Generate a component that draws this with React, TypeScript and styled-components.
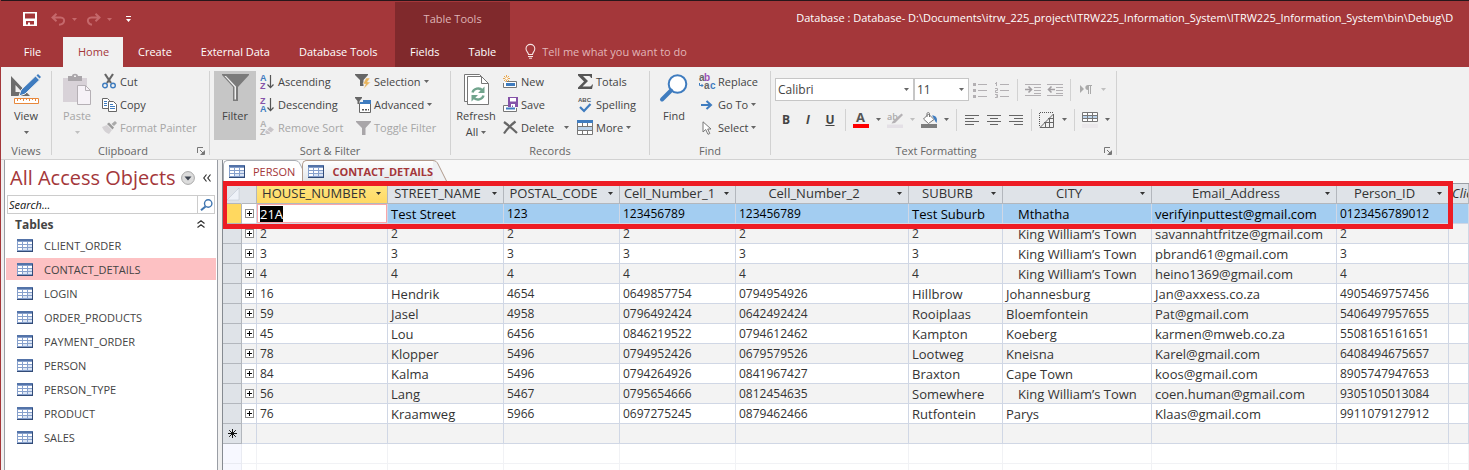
import React from "react";
import styled, { createGlobalStyle, css } from "styled-components";

const GlobalStyle = createGlobalStyle`
  * { box-sizing: border-box; }
  body {
    margin: 0;
    overflow: hidden;
    background: #f0f0f0;
    font-family: "Open Sans", "Noto Sans", sans-serif;
    font-size: 11px;
    color: #444;
  }
  button, input, select { font: inherit; color: inherit; }
  button { background: none; border: 0; padding: 0; margin: 0; cursor: pointer; }
  svg { display: block; flex: none; overflow: visible; }
`;

const colors = {
  brand: "#a4373a",
  brandDark: "#80292c",
  ribbon: "#f1f1f1",
  line: "#d2d2d2",
  gridLine: "#d0d7e5",
  marker: "#ed1c24",
};

/* ---------- Icons ---------- */

const Svg = ({ w, h, children }: { w: number; h: number; children: React.ReactNode }) => (
  <svg width={w} height={h} viewBox={`0 0 ${w} ${h}`} fill="none" aria-hidden="true">
    {children}
  </svg>
);

const Caret = ({ color = "#666" }: { color?: string }) => (
  <Svg w={5} h={3}><path d="M0 0H5L2.5 3Z" fill={color} /></Svg>
);

const SaveDiskIcon = () => (
  <Svg w={14} h={14}>
    <path d="M0 0H14V14H0Z M2 1.5V6.5H12V1.5Z M3 9V12.5H5V10.5H7V12.5H11V9Z" fill="#fff" fillRule="evenodd" />
  </Svg>
);
const UndoIcon = () => (
  <Svg w={15} h={13}>
    <path d="M5.5 .8 1.5 4.5 5.5 8.2M2 4.5H9.5C12.5 4.5 13.5 6.5 13 8.5 12.5 10.6 10.5 11.5 8 11.8" stroke="#c5686b" strokeWidth="2" />
  </Svg>
);
const RedoIcon = () => (
  <Svg w={15} h={13}>
    <path d="M9.5 .8 13.5 4.5 9.5 8.2M13 4.5H5.5C2.5 4.5 1.5 6.5 2 8.5 2.5 10.6 4 11.5 6 11.8" stroke="#c5686b" strokeWidth="2" />
  </Svg>
);
const CustomizeIcon = () => (
  <Svg w={5} h={6}><path d="M0 0H5V1H0ZM0 3H5L2.5 6Z" fill="#fff" /></Svg>
);
const BulbIcon = () => (
  <Svg w={11} h={15}>
    <path d="M3.5 10.5C3.5 8.5 1 7.5 1 4.8A4.4 4.4 0 0 1 9.8 4.8C9.8 7.5 7.5 8.5 7.5 10.5Z" stroke="#f6e3e3" strokeWidth="1.1" />
    <path d="M3 12.5H8M4 14.2H7" stroke="#f6e3e3" />
  </Svg>
);
const ViewIcon = () => (
  <Svg w={30} h={30}>
    <path d="M0 2 19 22H0ZM4.500 11V18H11Z" fill="#6d6d6d" fillRule="evenodd" />
    <path d="M8 22 10 16 24.500 2 28.500 6 14 20Z" fill="#3f7cbf" stroke="#f1f1f1" strokeWidth="1" />
    <path d="M25.500 1.500 27 0 30 3 28.500 4.500Z" fill="#3f7cbf" />
    <path d="M3.500 24.500H27.500V29.500H3.500Z" fill="#fff" stroke="#e8883c" />
    <path d="M6.500 24V27M9.500 24V26M12.500 24V27M15.500 24V26M18.500 24V27M21.500 24V26M24.500 24V27" stroke="#e8883c" />
  </Svg>
);
const PasteIcon = () => (
  <Svg w={28} h={31}>
    <path d="M0 4H24V28H0Z" fill="#d8d2d8" />
    <path d="M5 2H9C9 -1 15 -1 15 2H19V7H5Z" fill="#aaa6aa" />
    <path d="M11 1.500H13V3H11Z" fill="#f1f1f1" />
    <path d="M14.500 11.500H22.500L27.500 16.500V30.500H14.500Z" fill="#f6f2f7" stroke="#b5b0b5" />
    <path d="M22.500 11.500V16.500H27.500" stroke="#b5b0b5" />
  </Svg>
);
const CutIcon = () => (
  <Svg w={14} h={15}>
    <path d="M3 0 9 9M11 0 5 9" stroke="#666" strokeWidth="2.200" />
    <circle cx="3" cy="11.500" r="2.300" stroke="#3f7cbf" strokeWidth="1.400" />
    <circle cx="11" cy="11.500" r="2.300" stroke="#3f7cbf" strokeWidth="1.400" />
  </Svg>
);
const CopyIcon = () => (
  <Svg w={15} h={14}>
    <path d="M.5.500H5.500L7.500 2.500V10.500H.5Z" fill="#fff" stroke="#666" />
    <path d="M2 3.500H5M2 5.500H5M2 7.500H5" stroke="#3f7cbf" />
    <path d="M6.500 3.500H11.500L14.500 6.500V13.500H6.500Z" fill="#fff" stroke="#666" />
    <path d="M8 6.500H11M8 8.500H13M8 10.500H13" stroke="#3f7cbf" />
  </Svg>
);
const PainterIcon = () => (
  <Svg w={15} h={13}>
    <path d="M0 6 5 4 10 9 7 13C4 12 2 10 0 6Z" fill="#d5d2d5" />
    <path d="M5 3 7 1.500 12 6.500 10.500 8.500Z" fill="#9b9b9b" />
    <path d="M9.500 3 13 0 15 2 12 5Z" fill="#aaa" />
  </Svg>
);
const FilterIcon = () => (
  <Svg w={27} h={27}>
    <path d="M0 0H27V1L16 13V27H11V13L0 1Z" fill="#7b7b7b" />
    <path d="M2.500 2 12.500 13V25.500H14V12.500L4 2Z" fill="#f0f0f0" />
  </Svg>
);
const Letter = ({ x, y, fill, size = 8, children }: { x: number; y: number; fill: string; size?: number; children: string }) => (
  <text x={x} y={y} fill={fill} fontSize={size} fontWeight="700" fontFamily="Liberation Sans, sans-serif">{children}</text>
);
const SortIcon = ({ top, bottom, topColor, bottomColor }: { top: string; bottom: string; topColor: string; bottomColor: string }) => (
  <Svg w={14} h={16}>
    <Letter x={0} y={7} fill={topColor} size={9}>{top}</Letter>
    <Letter x={0} y={15} fill={bottomColor} size={9}>{bottom}</Letter>
    <path d="M10.500 1V13.500M7.500 10.500 10.500 13.700 13.500 10.500" stroke="#555" strokeWidth="1.200" />
  </Svg>
);
const RemoveSortIcon = () => (
  <Svg w={14} h={16}>
    <Letter x={0} y={7} fill="#b0b0b0" size={9}>A</Letter>
    <Letter x={0} y={15} fill="#b0b0b0" size={9}>Z</Letter>
    <path d="M5 12 10 6.500 14 9.500 9.500 14H6.500Z" fill="#c9c5c9" />
    <path d="M7 10 11 13" stroke="#f1f1f1" />
  </Svg>
);
const SelectionIcon = () => (
  <Svg w={16} h={15}>
    <path d="M0 0H13V1L8.500 6V12H5V6L0 1Z" fill="#666" />
    <path d="M11 4H15L12.500 8H15.500L8.500 15 10.500 10H8Z" fill="#e9b45c" stroke="#f1f1f1" strokeWidth=".5" />
  </Svg>
);
const AdvancedIcon = () => (
  <Svg w={16} h={16}>
    <path d="M0 0H7V1L4.500 4V7H2.500V4L0 1Z" fill="#666" />
    <path d="M4.500 6.500H15.500V15.500H4.500Z" fill="#fff" stroke="#666" />
    <path d="M8 3H16V7H5V5H8Z" fill="#3f7cbf" />
    <path d="M7 12H9V13.500H7ZM10 12H12V13.500H10ZM13 12H14V13.500H13Z" fill="#555" />
  </Svg>
);
const ToggleFilterIcon = () => (
  <Svg w={15} h={14}><path d="M0 0H15V1L9.500 7V14H6V7L0 1Z" fill="#a9a6a9" /></Svg>
);
const RefreshIcon = () => (
  <Svg w={25} h={31}>
    <path d="M3.500 27.500H.5V.5H15.500L17.500 2.500" fill="#fff" stroke="#777" />
    <path d="M3.500 2.500H17.500L24.500 9.500V30.500H3.500Z" fill="#fff" stroke="#777" />
    <path d="M17.500 2.500V9.500H24.500" stroke="#777" />
    <path d="M8.500 18.500C9.500 14.500 15.500 13 18.500 16.500M19.500 21.500C18.500 25.500 12.500 27 9.500 23.500" stroke="#71a48d" strokeWidth="2.400" />
    <path d="M20.500 12.500V19H14ZM7.500 27.500V21H14Z" fill="#71a48d" />
  </Svg>
);
const NewIcon = () => (
  <Svg w={14} h={14}>
    <path d="M2.500 6.500H13.500V12.500H.5V8" fill="#fff" stroke="#777" />
    <path d="M3 8H12V11H3Z" fill="#3f7cbf" />
    <path d="M3.500 0V7M0 3.500H7M1 1 6 6M6 1 1 6" stroke="#e9a94f" />
    <circle cx="3.500" cy="3.500" r="1.300" fill="#fff" />
  </Svg>
);
const SaveIcon = () => (
  <Svg w={15} h={15}>
    <path d="M5 8.500H.5V14.500H13.500V11" fill="#fff" stroke="#777" />
    <path d="M3 10.500H12V12.500H3Z" fill="#3f7cbf" />
    <path d="M5 0H15V10H5Z" fill="#8552a8" />
    <path d="M7 1H13V4.500H7ZM8 7H12V10H10V8.500H9V10H8Z" fill="#fff" />
  </Svg>
);
const DeleteIcon = () => (
  <Svg w={14} h={13}><path d="M1 1C5 4 10 8 14 12M12.500 .5C7 4.500 4 8 1 12.500" stroke="#666" strokeWidth="2.200" /></Svg>
);
const TotalsIcon = () => (
  <Svg w={15} h={15}><path d="M0 0H14V4H13C12.500 2.500 12 2 10 2H5L10 7 4.500 12.500H11C13 12.500 13.500 12 14 10.500H15L14 15H0V13.500L6 7.500 0 1.500Z" fill="#555" /></Svg>
);
const SpellingIcon = () => (
  <Svg w={15} h={16}>
    <Letter x={0} y={5} fill="#555" size={6}>ABC</Letter>
    <path d="M2 10 6 14 12.500 7" stroke="#3f7cbf" strokeWidth="2.200" />
  </Svg>
);
const MoreIcon = () => (
  <Svg w={16} h={15}>
    <path d="M.5 .5H15.500V14.500H.5Z" fill="#fff" stroke="#777" />
    <path d="M0 0H16V3H0Z" fill="#3f7cbf" />
    <path d="M1 7H15V10H1Z" fill="#bcd3ea" />
    <path d="M0 6.500H16M0 10.500H16M5.500 3V7M10.500 3V7M5.500 10V15M10.500 10V15" stroke="#777" />
  </Svg>
);
const FindIcon = () => (
  <Svg w={28} h={28}>
    <circle cx="17.500" cy="10" r="8.800" fill="#fff" stroke="#3f7cbf" strokeWidth="2" />
    <path d="M11 16.500 2 25.500" stroke="#3f7cbf" strokeWidth="4" strokeLinecap="round" />
  </Svg>
);
const ReplaceIcon = () => (
  <Svg w={16} h={16}>
    <Letter x={0} y={7} fill="#666" size={10}>a</Letter>
    <Letter x={5} y={7} fill="#9a4fb5" size={10}>b</Letter>
    <Letter x={5} y={15} fill="#666" size={10}>a</Letter>
    <Letter x={11} y={15} fill="#3f7cbf" size={10}>c</Letter>
    <path d="M.5 9V11.500H4M2.500 10 4 11.500 2.500 13" stroke="#3f7cbf" />
  </Svg>
);
const GoToIcon = () => (
  <Svg w={12} h={10}><path d="M0 5H9M5.500 1 10 5 5.500 9" stroke="#3f7cbf" strokeWidth="2" /></Svg>
);
const PointerIcon = () => (
  <Svg w={10} h={14}><path d="M1 .8V11L3.700 8.500 6 13.300 7.800 12.500 5.700 8H9Z" fill="#fff" stroke="#777" /></Svg>
);
const ListIcon = ({ numbered }: { numbered?: boolean }) => (
  <Svg w={14} h={16}>
    <path d="M5 2.500H14M5 8.500H14M5 14.500H14" stroke="#b3b0b3" />
    {numbered ? (
      <path d="M1.500 0V4M0 1.500H1.500M0 6.500H2.500V8.500H.5V10.500H3M0 12.500H2.500V15.500H0M1 14H2.500" stroke="#b3b0b3" />
    ) : (
      <path d="M0 1H3V4H0ZM0 7H3V10H0ZM0 13H3V16H0Z" fill="#b3b0b3" />
    )}
  </Svg>
);
const IndentIcon = ({ back }: { back?: boolean }) => (
  <Svg w={16} h={14}>
    <path d="M0 1.500H16M9 4.500H16M9 7.500H16M9 10.500H16M0 12.500H16" stroke="#b3b0b3" />
    <path d={back ? "M8 6.500H2M4.500 3.500 1.500 6.500 4.500 9.500" : "M0 6.500H6M3.500 3.500 6.500 6.500 3.500 9.500"} stroke="#a29fa2" strokeWidth="1.600" />
  </Svg>
);
const DirectionIcon = () => (
  <Svg w={12} h={9}>
    <path d="M0 0 4 4 0 8Z" fill="#aaa" />
    <path d="M8 0H12V1H11V9H10V1H9V9H8V5C4.500 5 4.500 0 8 0Z" fill="#aaa" />
  </Svg>
);
const FontColorIcon = () => (
  <Svg w={16} h={16}>
    <text x="3" y="10" fill="#555" fontSize="13" fontWeight="700" fontFamily="Open Sans, sans-serif">A</text>
    <path d="M0 12H16V16H0Z" fill="#f00" />
  </Svg>
);
const HighlightIcon = () => (
  <Svg w={16} h={16}>
    <text x="0" y="8" fill="#aaa" fontSize="9" fontWeight="600" fontFamily="Open Sans, sans-serif">ab</text>
    <path d="M14.500 1.500 16 3 8 11 4.500 11.500 6 9Z" fill="#b5b2b5" />
    <path d="M0 12.500H16V16H0Z" fill="#e4e0e6" />
  </Svg>
);
const FillIcon = () => (
  <Svg w={17} h={16}>
    <path d="M7.500 2 13 7.500 7.500 11.500 2.500 7Z" fill="#fff" stroke="#777" />
    <path d="M6 5V1.500C6 .3 8.500 .3 8.500 1.500V5" stroke="#777" />
    <path d="M11 3.500C15 3.500 17 6 15.500 11 14 9.500 13.500 7 11 3.500Z" fill="#3f7cbf" />
    <path d="M0 12H16V16H0Z" fill="#7d7d7d" />
  </Svg>
);
const AlignIcon = ({ d }: { d: string }) => (
  <Svg w={14} h={10}><path d={d} stroke="#666" /></Svg>
);
const GridlinesIcon = () => (
  <Svg w={16} h={16}>
    <path d="M.5 14V.5H14" stroke="#555" strokeDasharray="1 1" />
    <path d="M1 15.500 14.500 2V15.500ZM10.500 6V15M6.500 10V15M5 10.500H14M9 6.500H14" stroke="#666" />
  </Svg>
);
const AltRowIcon = () => (
  <Svg w={16} h={16}>
    <path d="M.5 .5H15.500V9.500H.5Z" fill="#fff" stroke="#777" />
    <path d="M1 4H15V6H1Z" fill="#bcd3ea" />
    <path d="M0 3.500H16M0 6.500H16M5.500 0V10M10.500 0V10" stroke="#777" />
    <path d="M0 12H16V16H0Z" fill="#ebe8eb" />
  </Svg>
);
const LauncherIcon = () => (
  <Svg w={8} h={8}><path d="M.5 6V.5H6M3 3 6 6M7.500 3.500V7.500H3.500" stroke="#777" /><path d="M7 4V7H4Z" fill="#777" /></Svg>
);
const TableIcon = () => (
  <Svg w={16} h={13}>
    <path d="M0 0H16V13H0Z" fill="#86a0cc" />
    <path d="M0 0H16V2H0Z" fill="#5373a8" />
    <path d="M1 3H5V5H1ZM6 3H10V5H6ZM11 3H15V5H11ZM1 6H5V8H1ZM6 6H10V8H6ZM1 9H5V11H1Z" fill="#fff" />
    <path d="M11 6H15V8H11ZM6 9H10V11H6ZM11 9H15V11H11Z" fill="#dce6f5" />
    <path d="M0 12H16V13H0ZM15 1H16V13H15Z" fill="#324b77" />
  </Svg>
);
const DropCircleIcon = () => (
  <Svg w={14} h={14}>
    <circle cx="7" cy="7" r="6.400" fill="#dcdcdc" stroke="#a8a8a8" />
    <path d="M3.500 5.500H10.500L7 9.500Z" fill="#3d4450" />
  </Svg>
);
const ChevronsLeftIcon = () => (
  <Svg w={8} h={8}><path d="M3.500 .5 .8 4 3.500 7.500M7.500 .5 4.800 4 7.500 7.500" stroke="#333" strokeWidth="1.200" /></Svg>
);
const ChevronsUpIcon = () => (
  <Svg w={8} h={8}><path d="M.5 3.500 4 .8 7.500 3.500M.5 7.500 4 4.800 7.500 7.500" stroke="#333" strokeWidth="1.200" /></Svg>
);
const SearchIcon = () => (
  <Svg w={13} h={12}>
    <circle cx="8.200" cy="4.500" r="3.700" fill="#fff" stroke="#3f75b0" strokeWidth="1.400" />
    <path d="M5.500 7.500 1 11.300" stroke="#3f75b0" strokeWidth="2" />
  </Svg>
);
const TabEdge = ({ active }: { active?: boolean }) => (
  <svg width="14" height="22" viewBox="0 0 14 22" fill="none" aria-hidden="true">
    <path d="M0 0C3 .5 4 2 5 4L12 18 14 22H0Z" fill={active ? "#eff1f3" : "#fff"} />
    <path d="M0 .5C3 .8 4 2 5 4L12 18 14 22" stroke={active ? "#b09a8c" : "#a9adb3"} />
  </svg>
);
const CornerIcon = () => (
  <Svg w={12} h={12}><path d="M12 0V12H0Z" fill="#eef2f8" stroke="#b9c1ce" strokeWidth=".5" /></Svg>
);
const NewRowIcon = () => (
  <Svg w={9} h={9}><path d="M4.500 0V9M0 4.500H9M1.200 1.200 7.800 7.800M7.800 1.200 1.200 7.800" stroke="#111" /></Svg>
);

/* ---------- Window header ---------- */

const Window = styled.div`
  display: flex;
  flex-direction: column;
  height: 100vh;
  border-left: 1px solid ${colors.brand};
`;
const Header = styled.header`
  display: flex;
  background: ${colors.brand};
  border-top: 1px solid #26161a;
  color: #fff;
`;
const HeaderSection = styled.div<{ $grow?: boolean }>`
  display: flex;
  flex-direction: column;
  flex: ${(p) => (p.$grow ? "1 1 0" : "0 0 394px")};
  min-width: 0;
`;
const QuickAccess = styled.div`
  display: flex;
  align-items: center;
  height: 36px;
  padding-left: 22px;
`;
const QuickButton = styled.button<{ $gap?: number }>`
  margin-right: ${(p) => p.$gap ?? 0}px;
`;
const TabRow = styled.nav`
  display: flex;
  height: 30px;
`;
const RibbonTab = styled.button<{ $active?: boolean; $width?: number }>`
  padding: 0 14px 0 15px;
  ${(p) => p.$width && css`width: ${p.$width}px;`}
  height: 30px;
  line-height: 28px;
  white-space: nowrap;
  color: ${(p) => (p.$active ? colors.brand : "#fff")};
  background: ${(p) => (p.$active ? colors.ribbon : "transparent")};
`;
const ContextTabs = styled.div`
  flex: 0 0 114px;
  margin-top: 1px;
  background: ${colors.brandDark};
`;
const ContextTitle = styled.div`
  height: 35px;
  line-height: 34px;
  text-align: center;
  color: #dfb4b5;
`;
const WindowTitle = styled.div`
  height: 36px;
  line-height: 34px;
  padding-left: 286px;
  white-space: nowrap;
  overflow: hidden;
`;
const TellMe = styled.label`
  display: flex;
  align-items: center;
  gap: 6px;
  height: 30px;
  padding: 0 0 2px 15px;
`;
const TellMeInput = styled.input`
  width: 200px;
  border: 0;
  padding: 0;
  background: transparent;
  outline: 0;
  &::placeholder { color: #e2b6b8; opacity: 1; }
`;

/* ---------- Ribbon ---------- */

const Ribbon = styled.div`
  display: flex;
  padding-top: 4px;
  background: ${colors.ribbon};
  border-bottom: 1px solid ${colors.line};
`;
const Group = styled.section<{ $width: number }>`
  flex: 0 0 ${(p) => p.$width}px;
  display: flex;
  flex-direction: column;
`;
const GroupDivider = styled.div`
  width: 1px;
  height: 84px;
  background: ${colors.line};
`;
const GroupBody = styled.div<{ $pad?: number }>`
  display: flex;
  height: 69px;
  padding-left: ${(p) => p.$pad ?? 0}px;
`;
const GroupFooter = styled.div`
  display: flex;
  align-items: center;
  gap: 7px;
  height: 19px;
  padding: 2px 4px 0 4px;
  color: #666;
`;
const GroupName = styled.span`
  flex: 1;
  text-align: center;
`;
const LargeButton = styled.button<{ $width: number; $on?: boolean; $muted?: boolean }>`
  display: flex;
  flex-direction: column;
  align-items: center;
  width: ${(p) => p.$width}px;
  height: 69px;
  padding-top: 3px;
  line-height: 16px;
  color: ${(p) => (p.$muted ? "#a6a6a6" : "#444")};
  background: ${(p) => (p.$on ? "#c6c6c6" : "transparent")};
`;
const LargeIcon = styled.span`
  display: flex;
  justify-content: center;
  height: 34px;
`;
const LargeLabel = styled.span`
  display: flex;
  align-items: center;
  gap: 3px;
  height: 16px;
`;
const SmallColumn = styled.div<{ $left: number; $width: number }>`
  display: flex;
  flex-direction: column;
  margin-left: ${(p) => p.$left}px;
  width: ${(p) => p.$width}px;
`;
const SmallButton = styled.button<{ $muted?: boolean }>`
  display: flex;
  align-items: center;
  gap: 3px;
  height: 23px;
  padding-bottom: 2px;
  white-space: nowrap;
  color: ${(p) => (p.$muted ? "#a6a6a6" : "#444")};
`;
const SmallIcon = styled.span`
  display: flex;
  justify-content: center;
  width: 16px;
`;
const SmallText = styled.span<{ $width?: number }>`
  text-align: left;
  ${(p) => p.$width && css`width: ${p.$width}px;`}
`;
const FormatPanel = styled.div`
  display: flex;
  flex-direction: column;
  gap: 7px;
  padding-top: 7px;
`;
const FormatRow = styled.div`
  display: flex;
  align-items: center;
  height: 23px;
`;
const SelectBox = styled.span<{ $width: number }>`
  position: relative;
  width: ${(p) => p.$width}px;
  height: 23px;
  & > svg { position: absolute; right: 5px; top: 10px; pointer-events: none; }
`;
const Select = styled.select`
  width: 100%;
  height: 100%;
  appearance: none;
  border: 1px solid #c6c6c6;
  border-radius: 0;
  padding: 0 2px;
  background: #fff;
  font-size: 12px;
`;
const FormatButton = styled.button<{ $narrow?: boolean }>`
  display: flex;
  align-items: center;
  justify-content: center;
  width: ${(p) => (p.$narrow ? 12 : 22)}px;
  height: 22px;
  font-size: 12px;
  font-weight: 700;
`;
const FormatDivider = styled.div`
  width: 1px;
  height: 22px;
  margin: 0 4px;
  background: ${colors.line};
`;

/* ---------- Navigation pane ---------- */

const Workspace = styled.div`
  display: flex;
  flex: 1;
  min-height: 0;
`;
const NavPane = styled.aside`
  flex: 0 0 214px;
  margin: 0 4px 0 3px;
  background: #fff;
  border: 1px solid #9a9ea5;
  border-top: 0;
  border-bottom: 0;
`;
const NavHeader = styled.div`
  display: flex;
  align-items: center;
  height: 35px;
  padding: 0 6px 0 5px;
`;
const NavTitle = styled.h1`
  flex: 1;
  margin: 0;
  font-size: 20px;
  line-height: 35px;
  font-weight: 400;
  color: ${colors.brand};
  white-space: nowrap;
`;
const NavHeaderButton = styled.button`
  margin-right: 8px;
  &:last-child { margin-right: 0; }
`;
const SearchBox = styled.div`
  display: flex;
  height: 19px;
  margin: 0 2px;
  border: 1px solid #ccc;
`;
const SearchInput = styled.input`
  flex: 1;
  min-width: 0;
  border: 0;
  padding: 0 1px;
  font-style: italic;
  outline: 0;
  &::placeholder { color: #111; opacity: 1; }
`;
const SearchButton = styled.button`
  width: 17px;
  padding-left: 2px;
  border-left: 1px solid #ccc;
`;
const NavSection = styled.button`
  display: flex;
  align-items: center;
  justify-content: space-between;
  width: 100%;
  height: 20px;
  padding: 0 12px 0 10px;
  font-size: 12px;
  font-weight: 700;
`;
const NavList = styled.ul`
  list-style: none;
  margin: 0;
  padding: 0 1px;
`;
const NavItem = styled.li<{ $selected?: boolean }>`
  height: 22px;
  margin-bottom: 2px;
  background: ${(p) => (p.$selected ? "#fdc1c3" : "transparent")};
`;
const NavLink = styled.a`
  display: flex;
  align-items: center;
  gap: 11px;
  height: 22px;
  padding-left: 11px;
  color: #444;
  text-decoration: none;
`;

/* ---------- Datasheet ---------- */

const Document = styled.main`
  flex: 1;
  min-width: 0;
  overflow: hidden;
  background: #fff;
  border-left: 1px solid #868b91;
`;
const DocTabs = styled.div`
  display: flex;
  align-items: flex-end;
  height: 24px;
  padding-bottom: 1px;
  background: #f8f8f8;
  border-bottom: 1px solid #9a9ea5;
`;
const DocTab = styled.button<{ $active?: boolean }>`
  position: relative;
  display: flex;
  align-items: center;
  gap: 8px;
  height: 22px;
  margin-right: 7px;
  padding-left: 5px;
  border-top: 1px solid ${(p) => (p.$active ? "#b09a8c" : "#a9adb3")};
  border-left: 1px solid ${(p) => (p.$active ? "#b09a8c" : "#a9adb3")};
  border-top-left-radius: 5px;
  color: ${colors.brand};
  font-weight: ${(p) => (p.$active ? 700 : 400)};
  background: ${(p) => (p.$active ? "linear-gradient(#fff, #e0e4e8)" : "#fff")};
  & > svg:last-child { position: absolute; left: 100%; top: -1px; }
`;
const SheetArea = styled.div`
  position: relative;
`;
const Highlight = styled.div`
  position: absolute;
  top: -3px;
  left: -1px;
  width: 1231px;
  height: 48px;
  border: 5px solid ${colors.marker};
  pointer-events: none;
`;
const Sheet = styled.table`
  width: 100%;
  table-layout: fixed;
  border-collapse: separate;
  border-spacing: 0;
  font-size: 13px;
  color: #333;
`;
const HeadCell = styled.th<{ $current?: boolean; $corner?: boolean }>`
  height: 20px;
  padding: ${(p) => (p.$corner ? "0 0 0 4px" : "0 6px 0 0")};
  font-weight: 400;
  line-height: 19px;
  background: ${(p) => (p.$current ? "linear-gradient(#ffe680, #ffd964)" : "#dfe3e8")};
  border-right: 1px solid ${(p) => (p.$corner ? "#dfe3e8" : "#b3b7bd")};
  border-bottom: 1px solid #b3b7bd;
  overflow: hidden;
`;
const HeadContent = styled.span`
  display: flex;
  align-items: center;
  white-space: nowrap;
`;
const HeadName = styled.span`
  flex: 1;
  padding-right: 5px;
  text-align: center;
`;
const AddColumn = styled.button`
  display: block;
  padding-left: 3px;
  font-style: italic;
  white-space: nowrap;
`;
const Row = styled.tr<{ $tone: "current" | "odd" | "even" | "blank" }>`
  background: ${(p) =>
    p.$tone === "current" ? "#a3cdf1" : p.$tone === "even" ? "#f3f3f3" : "#fff"};
  color: ${(p) => (p.$tone === "current" ? "#000" : "#333")};
  & > td {
    border-color: ${(p) => (p.$tone === "blank" ? "#f1f2f5" : colors.gridLine)};
  }
`;
const Cell = styled.td<{ $numeric?: boolean; $indent?: boolean; $editing?: boolean }>`
  height: 20px;
  padding: 0 0 0 ${(p) => (p.$indent ? 15 : 3)}px;
  line-height: 18px;
  font-size: ${(p) => (p.$numeric ? 12 : 13)}px;
  white-space: nowrap;
  overflow: hidden;
  border: 0 solid;
  border-right-width: 1px;
  border-bottom-width: 1px;
  ${(p) => p.$editing && css`background: #fff; box-shadow: inset 0 0 0 1px #f9a6a9;`}
`;
const Selector = styled.td<{ $current?: boolean; $blank?: boolean }>`
  height: 20px;
  padding: 0 0 0 5px;
  border: 0 solid;
  border-right-width: 1px;
  border-bottom-width: 1px;
  background: ${(p) => (p.$current ? "#ffd85f" : p.$blank ? "#f7f8ff" : "#dfe3e8")};
  && { border-color: ${(p) => (p.$blank ? "#e9ebf2" : "#b3b7bd")}; }
`;
const ExpandCell = styled.td`
  padding: 0 0 0 3px;
  background: #fff;
  border: 0 solid;
  border-right-width: 1px;
  border-bottom-width: 1px;
  tr:nth-child(even) > & { background: #f3f3f3; }
`;
const ExpandButton = styled.button`
  display: block;
  width: 9px;
  height: 9px;
  border: 1px solid #8c8c8c;
  background: #fff;
  & > svg { margin: 1px; }
`;
const SelectedText = styled.span`
  display: inline-block;
  line-height: 16px;
  background: #000;
  color: #fff;
`;

/* ---------- Data ---------- */

const tables = ["CLIENT_ORDER", "CONTACT_DETAILS", "LOGIN", "ORDER_PRODUCTS", "PAYMENT_ORDER", "PERSON", "PERSON_TYPE", "PRODUCT", "SALES"];

const columns = [
  { name: "HOUSE_NUMBER", width: 131 },
  { name: "STREET_NAME", width: 116 },
  { name: "POSTAL_CODE", width: 116 },
  { name: "Cell_Number_1", width: 116 },
  { name: "Cell_Number_2", width: 173 },
  { name: "SUBURB", width: 94 },
  { name: "CITY", width: 149 },
  { name: "Email_Address", width: 185 },
  { name: "Person_ID", width: 112 },
];

const rows = [
  ["21A", "Test Street", "123", "123456789", "123456789", "Test Suburb", " Mthatha", "verifyinputtest@gmail.com", "0123456789012"],
  ["2", "2", "2", "2", "2", "2", " King William’s Town", "savannahtfritze@gmail.com", "2"],
  ["3", "3", "3", "3", "3", "3", " King William’s Town", "pbrand61@gmail.com", "3"],
  ["4", "4", "4", "4", "4", "4", " King William’s Town", "heino1369@gmail.com", "4"],
  ["16", "Hendrik", "4654", "0649857754", "0794954926", "Hillbrow", "Johannesburg", "Jan@axxess.co.za", "4905469757456"],
  ["59", "Jasel", "4958", "0796492424", "0642492424", "Rooiplaas", "Bloemfontein", "Pat@gmail.com", "5406497957655"],
  ["45", "Lou", "6456", "0846219522", "0794612462", "Kampton", "Koeberg", "karmen@mweb.co.za", "5508165161651"],
  ["78", "Klopper", "5496", "0794952426", "0679579526", "Lootweg", "Kneisna", "Karel@gmail.com", "6408494675657"],
  ["84", "Kalma", "5496", "0794264926", "0841967427", "Braxton", "Cape Town", "koos@gmail.com", "8905747947653"],
  ["56", "Lang", "5467", "0795654666", "0812454635", "Somewhere", " King William’s Town", "coen.human@gmail.com", "9305105013084"],
  ["76", "Kraamweg", "5966", "0697275245", "0879462466", "Rutfontein", "Parys", "Klaas@gmail.com", "9911079127912"],
];

/* ---------- Parts ---------- */

type SmallProps = { icon: React.ReactNode; label: string; muted?: boolean; caret?: boolean; textWidth?: number };
const Small = ({ icon, label, muted, caret, textWidth }: SmallProps) => (
  <SmallButton $muted={muted}>
    <SmallIcon>{icon}</SmallIcon>
    <SmallText $width={textWidth}>{label}</SmallText>
    {caret && <Caret />}
  </SmallButton>
);

const RibbonGroup = ({ name, width, pad, launcher, children }: { name: string; width: number; pad?: number; launcher?: boolean; children: React.ReactNode }) => (
  <>
    <Group $width={width} aria-label={name}>
      <GroupBody $pad={pad}>{children}</GroupBody>
      <GroupFooter>
        <GroupName>{name}</GroupName>
        {launcher && <button aria-label={`${name} options`}><LauncherIcon /></button>}
      </GroupFooter>
    </Group>
    <GroupDivider />
  </>
);

const BlankCells = () => (
  <>
    {columns.map((c) => <Cell key={c.name} />)}
    <Cell />
  </>
);

export default function App() {
  return (
    <>
      <GlobalStyle />
      <Window>
        <Header>
          <HeaderSection>
            <QuickAccess>
              <QuickButton aria-label="Save" $gap={14}><SaveDiskIcon /></QuickButton>
              <QuickButton aria-label="Undo" $gap={6}><UndoIcon /></QuickButton>
              <QuickButton aria-label="Undo history" $gap={9}><Caret color="#c5686b" /></QuickButton>
              <QuickButton aria-label="Redo" $gap={6}><RedoIcon /></QuickButton>
              <QuickButton aria-label="Redo history" $gap={14}><Caret color="#c5686b" /></QuickButton>
              <QuickButton aria-label="Customize toolbar"><CustomizeIcon /></QuickButton>
            </QuickAccess>
            <TabRow>
              <RibbonTab $width={62}>File</RibbonTab>
              <RibbonTab $width={60} $active>Home</RibbonTab>
              <RibbonTab>Create</RibbonTab>
              <RibbonTab>External Data</RibbonTab>
              <RibbonTab>Database Tools</RibbonTab>
            </TabRow>
          </HeaderSection>
          <ContextTabs>
            <ContextTitle>Table Tools</ContextTitle>
            <TabRow>
              <RibbonTab>Fields</RibbonTab>
              <RibbonTab>Table</RibbonTab>
            </TabRow>
          </ContextTabs>
          <HeaderSection $grow>
            <WindowTitle>
              {"Database : Database- D:\\Documents\\itrw_225_project\\ITRW225_Information_System\\ITRW225_Information_System\\bin\\Debug\\D"}
            </WindowTitle>
            <TellMe>
              <BulbIcon />
              <TellMeInput aria-label="Tell me" placeholder="Tell me what you want to do" />
            </TellMe>
          </HeaderSection>
        </Header>

        <Ribbon>
          <RibbonGroup name="Views" width={50}>
            <LargeButton $width={50}>
              <LargeIcon><ViewIcon /></LargeIcon>
              <LargeLabel>View</LargeLabel>
              <LargeLabel><Caret /></LargeLabel>
            </LargeButton>
          </RibbonGroup>

          <RibbonGroup name="Clipboard" width={157} launcher>
            <LargeButton $width={50} $muted>
              <LargeIcon><PasteIcon /></LargeIcon>
              <LargeLabel>Paste</LargeLabel>
              <LargeLabel><Caret color="#c0c0c0" /></LargeLabel>
            </LargeButton>
            <SmallColumn $left={-1} $width={106}>
              <Small icon={<CutIcon />} label="Cut" />
              <Small icon={<CopyIcon />} label="Copy" />
              <Small icon={<PainterIcon />} label="Format Painter" muted />
            </SmallColumn>
          </RibbonGroup>

          <RibbonGroup name="Sort & Filter" width={240} pad={4}>
            <LargeButton $width={42} $on>
              <LargeIcon><FilterIcon /></LargeIcon>
              <LargeLabel>Filter</LargeLabel>
            </LargeButton>
            <SmallColumn $left={3} $width={96}>
              <Small icon={<SortIcon top="A" bottom="Z" topColor="#3f7cbf" bottomColor="#8552a8" />} label="Ascending" />
              <Small icon={<SortIcon top="Z" bottom="A" topColor="#8552a8" bottomColor="#3f7cbf" />} label="Descending" />
              <Small icon={<RemoveSortIcon />} label="Remove Sort" muted />
            </SmallColumn>
            <SmallColumn $left={0} $width={90}>
              <Small icon={<SelectionIcon />} label="Selection" caret />
              <Small icon={<AdvancedIcon />} label="Advanced" caret />
              <Small icon={<ToggleFilterIcon />} label="Toggle Filter" muted />
            </SmallColumn>
          </RibbonGroup>

          <RibbonGroup name="Records" width={198}>
            <LargeButton $width={50}>
              <LargeIcon><RefreshIcon /></LargeIcon>
              <LargeLabel>Refresh</LargeLabel>
              <LargeLabel>All <Caret /></LargeLabel>
            </LargeButton>
            <SmallColumn $left={1} $width={74}>
              <Small icon={<NewIcon />} label="New" />
              <Small icon={<SaveIcon />} label="Save" />
              <Small icon={<DeleteIcon />} label="Delete" caret textWidth={40} />
            </SmallColumn>
            <SmallColumn $left={1} $width={72}>
              <Small icon={<TotalsIcon />} label="Totals" />
              <Small icon={<SpellingIcon />} label="Spelling" />
              <Small icon={<MoreIcon />} label="More" caret />
            </SmallColumn>
          </RibbonGroup>

          <RibbonGroup name="Find" width={120}>
            <LargeButton $width={48}>
              <LargeIcon><FindIcon /></LargeIcon>
              <LargeLabel>Find</LargeLabel>
            </LargeButton>
            <SmallColumn $left={1} $width={70}>
              <Small icon={<ReplaceIcon />} label="Replace" />
              <Small icon={<GoToIcon />} label="Go To" caret />
              <Small icon={<PointerIcon />} label="Select" caret />
            </SmallColumn>
          </RibbonGroup>

          <RibbonGroup name="Text Formatting" width={345} pad={4} launcher>
            <FormatPanel>
              <FormatRow>
                <SelectBox $width={139}>
                  <Select aria-label="Font" defaultValue="Calibri"><option>Calibri</option></Select>
                  <Caret />
                </SelectBox>
                <SelectBox $width={55}>
                  <Select aria-label="Font size" defaultValue="11"><option>11</option></Select>
                  <Caret />
                </SelectBox>
                <FormatButton aria-label="Bullets"><ListIcon /></FormatButton>
                <FormatButton aria-label="Numbering"><ListIcon numbered /></FormatButton>
                <FormatDivider />
                <FormatButton aria-label="Increase indent"><IndentIcon /></FormatButton>
                <FormatButton aria-label="Decrease indent"><IndentIcon back /></FormatButton>
                <FormatDivider />
                <FormatButton aria-label="Text direction"><DirectionIcon /></FormatButton>
                <FormatButton $narrow aria-label="Direction options"><Caret color="#c0c0c0" /></FormatButton>
              </FormatRow>
              <FormatRow>
                <FormatButton>B</FormatButton>
                <FormatButton><i>I</i></FormatButton>
                <FormatButton><u>U</u></FormatButton>
                <FormatDivider />
                <FormatButton aria-label="Font color"><FontColorIcon /></FormatButton>
                <FormatButton $narrow aria-label="Font color options"><Caret /></FormatButton>
                <FormatButton aria-label="Highlight"><HighlightIcon /></FormatButton>
                <FormatButton $narrow aria-label="Highlight options"><Caret color="#c0c0c0" /></FormatButton>
                <FormatButton aria-label="Background color"><FillIcon /></FormatButton>
                <FormatButton $narrow aria-label="Background options"><Caret /></FormatButton>
                <FormatDivider />
                <FormatButton aria-label="Align left"><AlignIcon d="M0 .5H14M0 3.500H9M0 6.500H14M0 9.500H9" /></FormatButton>
                <FormatButton aria-label="Center"><AlignIcon d="M0 .5H14M3 3.500H11M0 6.500H14M3 9.500H11" /></FormatButton>
                <FormatButton aria-label="Align right"><AlignIcon d="M0 .5H14M5 3.500H14M0 6.500H14M5 9.500H14" /></FormatButton>
                <FormatDivider />
                <FormatButton aria-label="Gridlines"><GridlinesIcon /></FormatButton>
                <FormatButton $narrow aria-label="Gridline options"><Caret /></FormatButton>
                <FormatDivider />
                <FormatButton aria-label="Alternate row color"><AltRowIcon /></FormatButton>
                <FormatButton $narrow aria-label="Row color options"><Caret /></FormatButton>
              </FormatRow>
            </FormatPanel>
          </RibbonGroup>
        </Ribbon>

        <Workspace>
          <NavPane>
            <NavHeader>
              <NavTitle>All Access Objects</NavTitle>
              <NavHeaderButton aria-label="Choose category"><DropCircleIcon /></NavHeaderButton>
              <NavHeaderButton aria-label="Collapse pane"><ChevronsLeftIcon /></NavHeaderButton>
            </NavHeader>
            <SearchBox>
              <SearchInput aria-label="Search" placeholder="Search..." />
              <SearchButton aria-label="Start search"><SearchIcon /></SearchButton>
            </SearchBox>
            <NavSection>Tables<ChevronsUpIcon /></NavSection>
            <NavList>
              {tables.map((name) => (
                <NavItem key={name} $selected={name === "CONTACT_DETAILS"}>
                  <NavLink href={`#${name}`}><TableIcon />{name}</NavLink>
                </NavItem>
              ))}
            </NavList>
          </NavPane>

          <Document>
            <DocTabs>
              <DocTab><TableIcon />PERSON<TabEdge /></DocTab>
              <DocTab $active><TableIcon />CONTACT_DETAILS<TabEdge active /></DocTab>
            </DocTabs>
            <SheetArea>
              <Sheet>
                <colgroup>
                  <col width={19} />
                  <col width={15} />
                  {columns.map((c) => <col key={c.name} width={c.width} />)}
                  <col />
                </colgroup>
                <thead>
                  <tr>
                    <HeadCell $corner><CornerIcon /></HeadCell>
                    <HeadCell />
                    {columns.map((c, i) => (
                      <HeadCell key={c.name} scope="col" $current={i === 0}>
                        <HeadContent><HeadName>{c.name}</HeadName><Caret color="#333" /></HeadContent>
                      </HeadCell>
                    ))}
                    <HeadCell scope="col"><AddColumn>Click to Add</AddColumn></HeadCell>
                  </tr>
                </thead>
                <tbody>
                  {rows.map((row, r) => (
                    <Row key={row[0]} $tone={r === 0 ? "current" : r % 2 ? "even" : "odd"}>
                      <Selector $current={r === 0} />
                      <ExpandCell>
                        <ExpandButton aria-label={`Expand ${row[0]}`}>
                          <Svg w={5} h={5}><path d="M2.500 0V5M0 2.500H5" stroke="#000" /></Svg>
                        </ExpandButton>
                      </ExpandCell>
                      {row.map((value, c) => (
                        <Cell
                          key={columns[c].name}
                          $numeric={/^\d+$/.test(value)}
                          $indent={value.startsWith(" ")}
                          $editing={r === 0 && c === 0}
                        >
                          {r === 0 && c === 0 ? <SelectedText>{value}</SelectedText> : value.trim()}
                        </Cell>
                      ))}
                      <Cell />
                    </Row>
                  ))}
                  <Row $tone="even">
                    <Selector><NewRowIcon /></Selector>
                    <Cell />
                    <BlankCells />
                  </Row>
                  {[0, 1].map((n) => (
                    <Row key={n} $tone="blank">
                      <Selector $blank />
                      <Cell />
                      <BlankCells />
                    </Row>
                  ))}
                </tbody>
              </Sheet>
              <Highlight />
            </SheetArea>
          </Document>
        </Workspace>
      </Window>
    </>
  );
}
